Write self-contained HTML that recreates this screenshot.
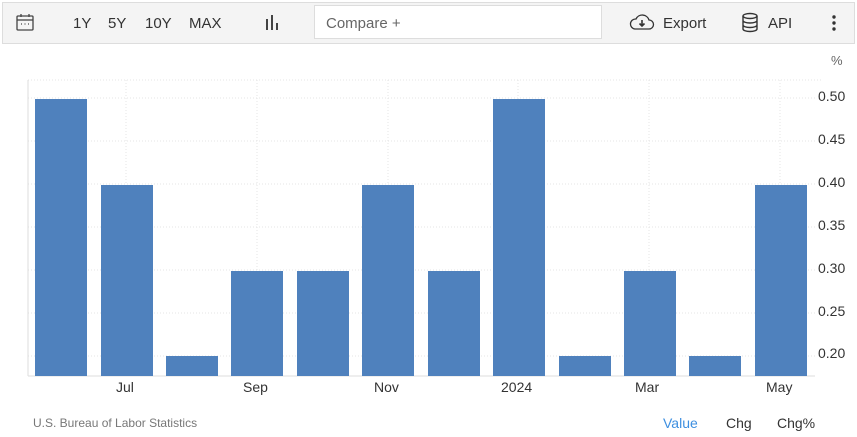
<!DOCTYPE html>
<html><head><style>
body{margin:0;width:857px;height:437px;background:#fff;font-family:"Liberation Sans",sans-serif;position:relative;overflow:hidden}
.tb{position:absolute;left:2px;top:2px;width:851px;height:40px;background:#f4f4f4;border:1px solid #ddd}
.t{position:absolute;top:15px;font-size:15px;color:#333}
.ax{position:absolute;font-size:14px;color:#333}
.bar{position:absolute;background:#4f81bd;width:52px;bottom:61px}
</style></head><body>
<div class="tb"></div>
<svg style="position:absolute;left:15px;top:12px" width="20" height="20" viewBox="0 0 20 20" fill="none" stroke="#444" stroke-width="1.3"><rect x="2" y="4" width="16" height="14" rx="1"/><line x1="2" y1="8" x2="18" y2="8"/><line x1="6" y1="2" x2="6" y2="5"/><line x1="14" y1="2" x2="14" y2="5"/><line x1="6" y1="12" x2="7" y2="12"/><line x1="9.5" y1="12" x2="10.5" y2="12"/><line x1="13" y1="12" x2="14" y2="12"/></svg>
<span class="t" style="left:73px">1Y</span><span class="t" style="left:108px">5Y</span><span class="t" style="left:145px">10Y</span><span class="t" style="left:189px">MAX</span>
<svg style="position:absolute;left:264px;top:14px" width="16" height="16"><rect x="2" y="5" width="2" height="11" fill="#444"/><rect x="7" y="1" width="2" height="15" fill="#444"/><rect x="12" y="9" width="2" height="7" fill="#444"/></svg>
<div style="position:absolute;left:314px;top:5px;width:286px;height:32px;background:#fff;border:1px solid #ddd"></div>
<span class="t" style="left:326px;color:#666">Compare +</span>
<svg style="position:absolute;left:629px;top:13px" width="26" height="18" viewBox="0 0 26 18" fill="none" stroke="#333" stroke-width="1.3"><path d="M6 16h14a4.5 4.5 0 0 0 0-9 7 7 0 0 0-13-1 5 5 0 0 0-1 10z"/><path d="M13 7v6M10.5 10.5l2.5 2.5 2.5-2.5" stroke-width="1.6"/></svg>
<span class="t" style="left:663px">Export</span>
<svg style="position:absolute;left:741px;top:12px" width="18" height="22" viewBox="0 0 18 22" fill="none" stroke="#333" stroke-width="1.4"><ellipse cx="9" cy="4" rx="7" ry="2.5"/><path d="M2 4v13c0 1.4 3 2.5 7 2.5s7-1.1 7-2.5V4M2 8.5c0 1.4 3 2.5 7 2.5s7-1.1 7-2.5M2 13c0 1.4 3 2.5 7 2.5s7-1.1 7-2.5"/></svg>
<span class="t" style="left:768px">API</span>
<svg style="position:absolute;left:832px;top:15px" width="4" height="16"><circle cx="2" cy="2" r="1.7" fill="#333"/><circle cx="2" cy="8" r="1.7" fill="#333"/><circle cx="2" cy="14" r="1.7" fill="#333"/></svg>
<svg style="position:absolute;left:0;top:0" width="857" height="437">
<g stroke="#e4e4e4" stroke-dasharray="1 2">
<line x1="28" y1="80" x2="822" y2="80"/>
<line x1="28" y1="98" x2="815" y2="98"/><line x1="28" y1="141" x2="815" y2="141"/><line x1="28" y1="184" x2="815" y2="184"/><line x1="28" y1="227" x2="815" y2="227"/><line x1="28" y1="270" x2="815" y2="270"/><line x1="28" y1="313" x2="815" y2="313"/><line x1="28" y1="356" x2="815" y2="356"/>
<line x1="126" y1="80" x2="126" y2="376"/><line x1="257" y1="80" x2="257" y2="376"/><line x1="388" y1="80" x2="388" y2="376"/><line x1="518" y1="80" x2="518" y2="376"/><line x1="649" y1="80" x2="649" y2="376"/><line x1="780" y1="80" x2="780" y2="376"/>
</g>
<line x1="28" y1="80" x2="28" y2="376" stroke="#ddd"/>
<line x1="28" y1="376" x2="815" y2="376" stroke="#ddd"/>
</svg>
<div class="bar" style="left:35px;height:277px"></div>
<div class="bar" style="left:101px;height:191px"></div>
<div class="bar" style="left:166px;height:20px"></div>
<div class="bar" style="left:231px;height:105px"></div>
<div class="bar" style="left:297px;height:105px"></div>
<div class="bar" style="left:362px;height:191px"></div>
<div class="bar" style="left:428px;height:105px"></div>
<div class="bar" style="left:493px;height:277px"></div>
<div class="bar" style="left:559px;height:20px"></div>
<div class="bar" style="left:624px;height:105px"></div>
<div class="bar" style="left:689px;height:20px"></div>
<div class="bar" style="left:755px;height:191px"></div>
<span class="ax" style="left:831px;top:53px;font-size:13px;color:#666">%</span>
<span class="ax" style="left:818px;top:88px">0.50</span>
<span class="ax" style="left:818px;top:131px">0.45</span>
<span class="ax" style="left:818px;top:174px">0.40</span>
<span class="ax" style="left:818px;top:217px">0.35</span>
<span class="ax" style="left:818px;top:260px">0.30</span>
<span class="ax" style="left:818px;top:303px">0.25</span>
<span class="ax" style="left:818px;top:345px">0.20</span>
<span class="ax" style="left:116px;top:379px">Jul</span>
<span class="ax" style="left:243px;top:379px">Sep</span>
<span class="ax" style="left:374px;top:379px">Nov</span>
<span class="ax" style="left:501px;top:379px">2024</span>
<span class="ax" style="left:635px;top:379px">Mar</span>
<span class="ax" style="left:766px;top:379px">May</span>
<span class="ax" style="left:33px;top:416px;font-size:12px;color:#777">U.S. Bureau of Labor Statistics</span>
<span class="ax" style="left:663px;top:415px;color:#3d8fe0">Value</span>
<span class="ax" style="left:726px;top:415px">Chg</span>
<span class="ax" style="left:777px;top:415px">Chg%</span>
</body></html>
